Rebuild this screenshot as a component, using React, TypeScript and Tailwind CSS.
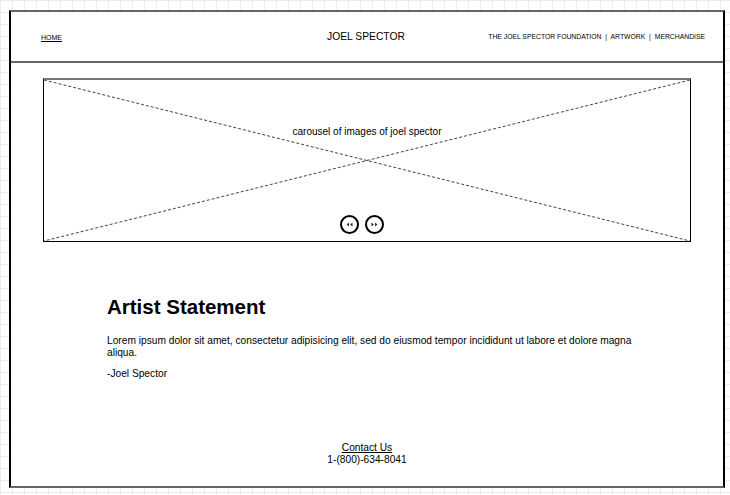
import React from "react";

const Arrows = ({ dir }: { dir: "left" | "right" }) => (
  <svg width="7" height="5" viewBox="0 0 7 5" className={dir === "right" ? "rotate-180" : ""}>
    <path d="M3 0.5 L0.5 2.5 L3 4.5 Z" fill="#333" />
    <path d="M6.5 0.5 L4 2.5 L6.5 4.5 Z" fill="#333" />
  </svg>
);

const App = () => {
  return (
    <div className="w-[730px] h-[495px] bg-white bg-[linear-gradient(to_right,#ececec_1px,transparent_1px),linear-gradient(to_bottom,#ececec_1px,transparent_1px)] bg-[size:12px_12px] pt-[10px] pl-[9px] font-['Liberation_Sans',Arial,sans-serif] text-black">
      {/* page frame */}
      <div className="w-[716px] h-[478px] bg-white flex flex-col border-x-2 border-x-black border-y-2 border-y-[#666]">
        {/* header */}
        <div className="h-[51px] shrink-0 border-b-2 border-[#666] grid grid-cols-[1fr_auto_1fr] items-center pl-[30px] pr-[18px] pt-[2px]">
          <span className="text-[7px] underline pt-[2px] justify-self-start">HOME</span>
          <div className="text-[10.3px] mr-[14px] pb-[1px]">JOEL SPECTOR</div>
          <div className="text-[6.8px] justify-self-end whitespace-nowrap">
            THE JOEL SPECTOR FOUNDATION <span className="mx-[2px]">|</span> ARTWORK <span className="mx-[2px]">|</span> MERCHANDISE
          </div>
        </div>

        {/* carousel placeholder */}
        <div className="mt-[15px] mx-[32px] h-[164px] relative border border-black border-t-2 border-t-[#777]">
          <svg className="absolute inset-0 w-full h-full" preserveAspectRatio="none" viewBox="0 0 100 100">
            <line x1="0" y1="0" x2="100" y2="100" stroke="#444" strokeWidth="1" strokeDasharray="3 2" vectorEffect="non-scaling-stroke" />
            <line x1="100" y1="0" x2="0" y2="100" stroke="#444" strokeWidth="1" strokeDasharray="3 2" vectorEffect="non-scaling-stroke" />
          </svg>
          <div className="relative flex flex-col items-center h-full">
            <p className="text-[10px] mt-[44px]">carousel of images of joel spector</p>
            <div className="flex gap-[6px] mt-auto mb-[7px] mr-[10px]">
              <button className="w-[19px] h-[19px] rounded-full border-2 border-black bg-white flex items-center justify-center">
                <Arrows dir="left" />
              </button>
              <button className="w-[19px] h-[19px] rounded-full border-2 border-black bg-white flex items-center justify-center">
                <Arrows dir="right" />
              </button>
            </div>
          </div>
        </div>

        {/* artist statement */}
        <div className="pl-[96px] mt-[52px] w-[640px]">
          <h1 className="text-[20.5px] font-bold leading-[26px]">Artist Statement</h1>
          <p className="text-[10.2px] leading-[12px] mt-[15px]">
            Lorem ipsum dolor sit amet, consectetur adipisicing elit, sed do eiusmod tempor incididunt ut labore et dolore magna aliqua.
          </p>
          <p className="text-[10.2px] leading-[12px] mt-[9px]">-Joel Spector</p>
        </div>

        {/* footer */}
        <div className="mt-auto pb-[20px] flex flex-col items-center text-[10.2px] leading-[12px]">
          <span className="underline">Contact Us</span>
          <span>1-(800)-634-8041</span>
        </div>
      </div>
    </div>
  );
};

export default App;
